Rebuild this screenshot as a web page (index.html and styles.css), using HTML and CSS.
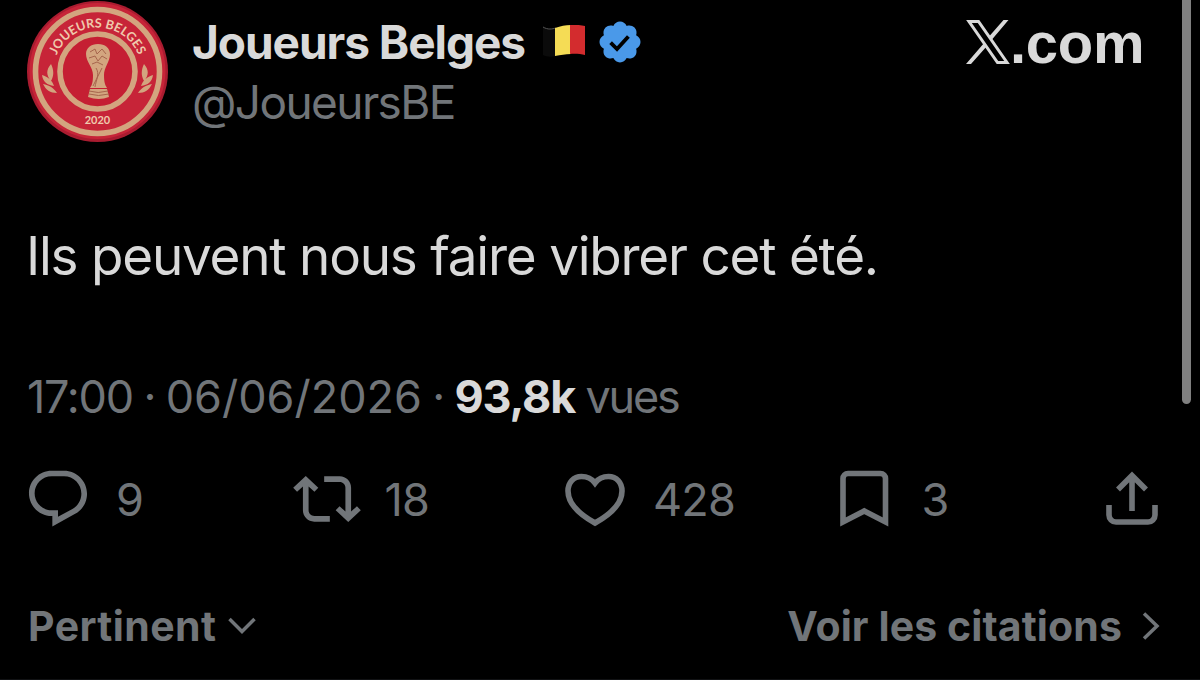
FILE: index.html
```html
<!DOCTYPE html>
<html lang="fr">
<head>
    <meta charset="UTF-8">
    <meta name="viewport" content="width=device-width, initial-scale=1.0">
    <title>Joueurs Belges</title>
    <link rel="stylesheet" href="styles.css">
</head>
<body>
    <div class="post">
        <header class="header">
            <svg class="avatar" viewBox="0 0 142 144">
                <defs>
                    <path id="arc" d="M27.500 71.500a44 44 0 0 1 88 0"/>
                    <g id="laurel">
                        <path d="M25 64c-5 6-5 11 0 17 3-5 3-11 0-17zM16 75c1 7 5 10 12 11-2-6-6-9-12-11zM17 84c3 6 7 9 14 9-3-5-8-8-14-9z"/>
                    </g>
                </defs>
                <circle cx="71.5" cy="71.5" r="70.5" fill="#a91c30"/>
                <circle cx="71.5" cy="71" r="68" fill="#c72438"/>
                <circle cx="71.5" cy="71.5" r="62" fill="#c72438" stroke="#d3a57f" stroke-width="5.6"/>
                <circle cx="71.5" cy="71.5" r="37.5" fill="#c51f33" stroke="#d3a57f" stroke-width="5.6"/>
                <text class="avatar-name"><textPath href="#arc" startOffset="50%">JOUEURS BELGES</textPath></text>
                <text class="avatar-year" x="71.5" y="123.5">2020</text>
                <g fill="#d3a57f">
                    <use href="#laurel"/>
                    <use href="#laurel" transform="matrix(-1 0 0 1 143 0)"/>
                    <path d="M60 54c0-6 5-10 12-10s12 4 12 10c0 8-6 13-6 21 0 7 1 10 3 13H64c2-3 3-6 3-13 0-8-7-13-7-21z"/>
                    <path d="M64 89h17l2 8q-10 4-21 0z"/>
                </g>
                <path d="M64 52l5-3 2 5 5-5 4 5M63 58l6-2 3 5 4-5 5 3M66 64l5-2 6 3M70 68c4 6 0 12-1 19M76 68c-3 6-6 12-9 18M63 91q9 3 19 0M63 94q9 3 20 0" fill="none" stroke="#a6654d" stroke-width="1"/>
            </svg>
            <div class="author">
                <div class="name-row">
                    <span class="name">Joueurs Belges</span>
                    <svg class="flag" viewBox="0 0 44 34">
                        <path d="M1 2c5 3 9 2 13 1v28c-5 1-9 1-13-1z" fill="#0b0b0b"/>
                        <path d="M1 2c5 3 9 2 13 1" fill="none" stroke="#555"/>
                        <path d="M13 3c6-2 10-3 16-3v29c-6 0-10 1-16 2z" fill="#f5dc55"/>
                        <path d="M28 0c5-.5 11 0 15 1v29c-4-1-10-1.500-15-1z" fill="#d32c2e"/>
                    </svg>
                    <svg class="verified" viewBox="1.500 1.500 21 21">
                        <path d="M22.250 12c0-1.430-.880-2.670-2.190-3.340.460-1.390.200-2.900-.810-3.910s-2.520-1.270-3.910-.810c-.660-1.310-1.910-2.190-3.340-2.190s-2.670.880-3.330 2.190c-1.400-.460-2.910-.200-3.920.810s-1.260 2.520-.800 3.910c-1.310.670-2.200 1.910-2.200 3.340s.890 2.670 2.200 3.340c-.460 1.390-.210 2.900.800 3.910s2.520 1.260 3.910.810c.670 1.310 1.910 2.190 3.340 2.190s2.680-.880 3.340-2.190c1.390.450 2.900.200 3.910-.810s1.270-2.520.810-3.910c1.310-.670 2.190-1.910 2.190-3.340z" fill="#4a99e9"/>
                        <path d="M7.300 12.300l3.200 3.200 5.700-6.300" fill="none" stroke="#000" stroke-width="1.900"/>
                    </svg>
                </div>
                <div class="handle">@JoueursBE</div>
            </div>
            <div class="site">
                <svg class="x-logo" viewBox="0 0 44 44">
                    <path d="M3 1.500h9.500L41 42.500h-9.500z" fill="none" stroke="#d9d9d9" stroke-width="3"/>
                    <path d="M37.500 0h5L26 19.500l-2.500-3.500zM0 44h5L21 26l-2.500-3.500z" fill="#d9d9d9"/>
                </svg>
                <span class="site-name">.com</span>
            </div>
        </header>

        <p class="content">Ils peuvent nous faire vibrer cet été.</p>

        <div class="meta"><span>17:00 · </span><span class="date">06/06/2026</span> · <span class="views">93,8k</span> <span class="label">vues</span></div>

        <div class="actions">
            <div class="action">
                <svg class="icon" viewBox="0 0 24 24"><path d="M1.751 10c0-4.420 3.584-8 8.005-8h4.366c4.490 0 8.129 3.640 8.129 8.130 0 2.960-1.607 5.680-4.196 7.110l-8.054 4.460v-3.690h-.067c-4.490.100-8.183-3.510-8.183-8.010zm8.005-6c-3.317 0-6.005 2.690-6.005 6 0 3.370 2.770 6.080 6.138 6.010l.351-.010h1.761v2.300l5.087-2.810c1.951-1.080 3.163-3.130 3.163-5.360 0-3.390-2.744-6.130-6.129-6.130H9.756z"/></svg>
                <span>9</span>
            </div>
            <div class="action">
                <svg class="icon" viewBox="0 0 24 24"><path d="M4.500 3.880l4.432 4.140-1.364 1.460L5.500 7.550V16c0 1.100.896 2 2 2H13v2H7.500c-2.209 0-4-1.790-4-4V7.550L1.432 9.480.068 8.020 4.500 3.880zM16.500 6H11V4h5.500c2.209 0 4 1.790 4 4v8.450l2.068-1.930 1.364 1.460-4.432 4.140-4.432-4.140 1.364-1.460 2.068 1.930V8c0-1.100-.896-2-2-2z"/></svg>
                <span>18</span>
            </div>
            <div class="action">
                <svg class="icon line" viewBox="0 0 68 68"><path d="M34 18C29.500 12 25 11.500 20.500 11.500c-8 0-13.500 6-13.500 14.500 0 12 9 22 27 32C52 48 61 38 61 26c0-8.500-5.500-14.500-13.500-14.500-4.500 0-9 .5-13.500 6.500z"/></svg>
                <span>428</span>
            </div>
            <div class="action">
                <svg class="icon line" viewBox="0 0 68 68"><path d="M13 57V13.500a5 5 0 0 1 5-5h32.500a5 5 0 0 1 5 5V57L34.250 46z"/></svg>
                <span>3</span>
            </div>
            <div class="action">
                <svg class="icon line" viewBox="0 0 68 68"><path d="M34 46V11M20 24.500l14-14 14 14M11 40v10a7 7 0 0 0 7 7h32a7 7 0 0 0 7-7V40"/></svg>
            </div>
        </div>

        <footer class="footer">
            <div class="sort">
                <span>Pertinent</span>
                <svg class="chevron-down" viewBox="0 0 28 18"><path d="M1.500 2L14 14.500 26.500 2"/></svg>
            </div>
            <div class="quotes">
                <span>Voir les citations</span>
                <svg class="chevron-right" viewBox="0 0 18 28"><path d="M2 1.500L15 14 2 26.500"/></svg>
            </div>
        </footer>
    </div>
    <div class="scrollbar"></div>
</body>
</html>
```
FILE: styles.css
```css
* {
    box-sizing: border-box;
}
body {
    margin: 0;
    height: 680px;
    overflow: hidden;
    background-color: #000;
    color: #717579;
    font-family: Inter, "Liberation Sans", sans-serif;
    white-space: nowrap;
}
svg {
    display: block;
    flex-shrink: 0;
}
.post {
    height: 680px;
    border-bottom: 1px solid #111214;
}
.header {
    display: flex;
    height: 220px;
    padding-left: 26px;
}
.avatar {
    width: 142px;
    height: 144px;
}
.avatar-name,
.avatar-year {
    fill: #efc9ac;
    font-family: Lato, sans-serif;
    font-weight: 700;
    text-anchor: middle;
}
.avatar-name {
    font-size: 12.6px;
}
.avatar-year {
    font-size: 11px;
}
.author {
    margin-left: 24px;
    padding-top: 12px;
}
.name-row {
    display: flex;
    align-items: center;
    height: 60px;
}
.name {
    width: 350px;
    color: #d9d9d9;
    font-size: 46px;
    font-weight: 700;
    letter-spacing: -1.05px;
    line-height: 60px;
}
.flag {
    width: 44px;
    height: 34px;
}
.verified {
    width: 42px;
    height: 42px;
    margin-left: 13px;
}
.handle {
    font-size: 46px;
    letter-spacing: -1.6px;
    line-height: 60px;
}
.site {
    display: flex;
    height: 64px;
    margin-left: auto;
    padding: 20px 57px 0 0;
}
.x-logo {
    width: 44px;
    height: 44px;
}
.site-name {
    width: 133px;
    color: #d9d9d9;
    font-family: "Liberation Sans", Arial, sans-serif;
    font-size: 58px;
    font-weight: 700;
    letter-spacing: -0.3px;
    line-height: 46px;
}
.content {
    height: 72px;
    margin: 0;
    padding-left: 26px;
    color: #d9d9d9;
    font-size: 53px;
    letter-spacing: -1.23px;
    line-height: 72px;
}
.meta {
    height: 60px;
    margin-top: 75px;
    padding-left: 27px;
    font-size: 45px;
    letter-spacing: -1.2px;
    line-height: 60px;
    word-spacing: -1px;
}
.date {
    letter-spacing: 0;
}
.views {
    color: #d9d9d9;
    font-weight: 700;
}
.label {
    letter-spacing: -2.2px;
}
.actions {
    display: grid;
    grid-template-columns: repeat(4, 268.5px) 68px;
    height: 68px;
    margin-top: 38px;
    padding-left: 24px;
    font-size: 45px;
    letter-spacing: -0.8px;
}
.action {
    display: flex;
    align-items: center;
    gap: 24px;
}
.icon {
    width: 68px;
    height: 68px;
    fill: #717579;
}
.line {
    fill: none;
    stroke: #717579;
    stroke-width: 5.6;
}
.footer {
    display: flex;
    justify-content: space-between;
    height: 60px;
    margin-top: 63px;
    padding: 0 40px 0 28px;
    font-size: 41px;
    font-weight: 700;
    letter-spacing: 0.1px;
}
.sort {
    letter-spacing: 0.4px;
}
.sort,
.quotes {
    display: flex;
    align-items: center;
}
.chevron-down,
.chevron-right {
    fill: none;
    stroke: #717579;
    stroke-width: 3.5;
}
.chevron-down {
    width: 28px;
    height: 18px;
    margin-left: 12px;
}
.chevron-right {
    width: 18px;
    height: 28px;
    margin-left: 20px;
}
/* floats over the right edge of the post */
.scrollbar {
    position: absolute;
    top: -10px;
    right: 9px;
    width: 9px;
    height: 414px;
    border-radius: 5px;
    background-color: #808080;
}
```
